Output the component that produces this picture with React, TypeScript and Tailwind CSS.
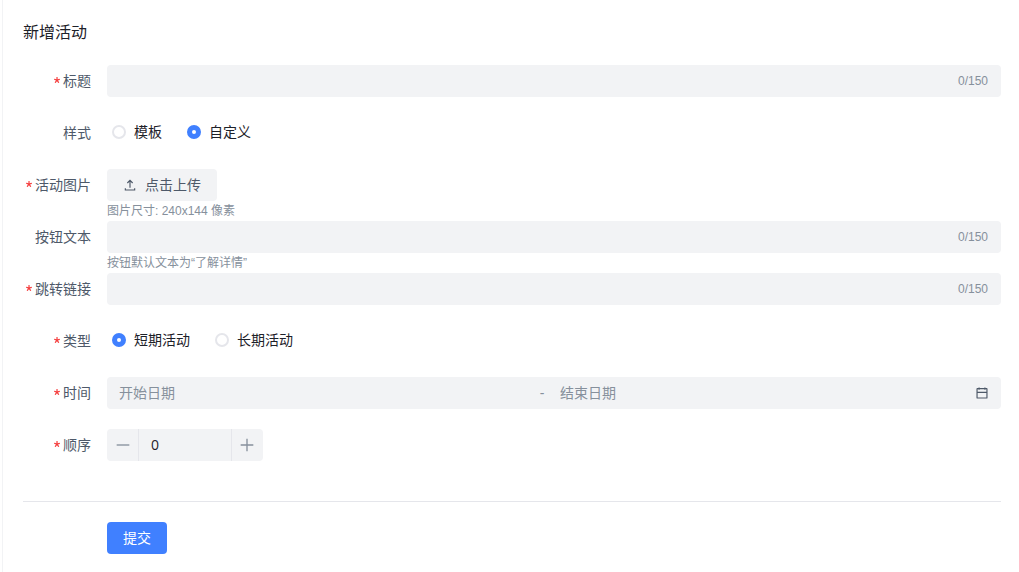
import { useState } from "react"
import type { ReactNode } from "react"

type FormItemProps = {
  label: string
  htmlFor?: string
  required?: boolean
  hint?: string
  children: ReactNode
}

function FormItem({ label, htmlFor, required, hint, children }: FormItemProps) {
  const Label = htmlFor ? "label" : "span"
  return (
    <div className="flex">
      <Label
        htmlFor={htmlFor}
        className="flex h-8 w-[84px] shrink-0 items-center justify-end pr-4 text-[#4e5969]"
      >
        {required && (
          <svg viewBox="0 0 1024 1024" className="mr-[3px] mb-0.5 size-1.5 text-[#f53f3f]" fill="currentColor">
            <path d="M583.338667 17.066667c18.773333 0 34.133333 15.36 34.133333 34.133333v349.013333l313.344-101.888a34.133333 34.133333 0 0 1 43.008 22.016l42.154667 129.706667a34.133333 34.133333 0 0 1-21.845334 43.178667l-315.733333 102.4 208.896 287.744a34.133333 34.133333 0 0 1-7.509333 47.786666l-110.421334 80.213334a34.133333 34.133333 0 0 1-47.786666-7.509334L505.685333 706.218667 288.426667 1005.226667a34.133333 34.133333 0 0 1-47.786667 7.509333l-110.421333-80.213333a34.133333 34.133333 0 0 1-7.509334-47.786667l214.186667-295.253333L29.013333 489.813333a34.133333 34.133333 0 0 1-22.016-43.008l42.154667-129.877333a34.133333 34.133333 0 0 1 43.008-22.016l320.512 104.106667L412.672 51.2c0-18.773333 15.36-34.133333 34.133333-34.133333h136.533334z" />
          </svg>
        )}
        {label}
      </Label>
      <div className="min-w-0 flex-1">
        {children}
        <div className="h-5 text-xs leading-5 text-[#86909c]">{hint}</div>
      </div>
    </div>
  )
}

function CountInput({ id }: { id: string }) {
  const [value, setValue] = useState("")
  return (
    <div className="flex h-8 items-center rounded-sm bg-[#f2f3f5] px-3">
      <input
        id={id}
        type="text"
        maxLength={150}
        value={value}
        onChange={(e) => setValue(e.target.value)}
        className="min-w-0 flex-1 text-[#1d2129] outline-none"
      />
      <span className="pr-px text-xs text-[#86909c]">{value.length}/150</span>
    </div>
  )
}

function RadioGroup({ name, label, options, initial }: { name: string; label: string; options: string[]; initial: string }) {
  const [value, setValue] = useState(initial)
  return (
    <div role="radiogroup" aria-label={label} className="h-8">
      <div className="flex h-[30px] items-center gap-5">
        {options.map((option) => (
          <label key={option} className="flex items-center gap-2 pl-[5px] leading-5 text-[#1d2129]">
            <input
              type="radio"
              name={name}
              checked={value === option}
              onChange={() => setValue(option)}
              className="size-3.5 appearance-none rounded-full border-2 border-[#e5e6eb] bg-white checked:border-5 checked:border-[#4080ff]"
            />
            {option}
          </label>
        ))}
      </div>
    </div>
  )
}

const iconProps = {
  viewBox: "0 0 48 48",
  fill: "none",
  stroke: "currentColor",
  strokeWidth: 4,
}

export default function App() {
  const [order, setOrder] = useState(0)

  return (
    <main className="ml-0.5 min-h-screen border-l border-[#f2f3f5] bg-white pt-5 pr-[18px] pb-[18px] pl-5 font-['Liberation_Sans','Noto_Sans_CJK_SC',sans-serif] text-sm">
      <h1 className="mb-5 text-base leading-[25px] text-[#1d2129]">新增活动</h1>

      <form onSubmit={(e) => e.preventDefault()}>
        <FormItem label="标题" htmlFor="title" required>
          <CountInput id="title" />
        </FormItem>

        <FormItem label="样式">
          <RadioGroup name="style" label="样式" options={["模板", "自定义"]} initial="自定义" />
        </FormItem>

        <FormItem label="活动图片" htmlFor="upload" required hint="图片尺寸: 240x144 像素">
          <button
            id="upload"
            type="button"
            className="flex h-8 items-center gap-2 rounded-sm bg-[#f2f3f5] px-4 text-[#4e5969]"
          >
            <svg {...iconProps} className="size-3.5">
              <path d="M14.93 17.071 24 8l9.071 9.071m-9.07 16.071v-25M40 35v6H8v-6" />
            </svg>
            点击上传
          </button>
        </FormItem>

        <FormItem label="按钮文本" htmlFor="button-text" hint="按钮默认文本为“了解详情”">
          <CountInput id="button-text" />
        </FormItem>

        <FormItem label="跳转链接" htmlFor="link" required>
          <CountInput id="link" />
        </FormItem>

        <FormItem label="类型" required>
          <RadioGroup name="type" label="类型" options={["短期活动", "长期活动"]} initial="短期活动" />
        </FormItem>

        <FormItem label="时间" htmlFor="start-date" required>
          <div className="flex h-8 items-center rounded-sm bg-[#f2f3f5] pr-3 pl-1 text-[#86909c]">
            <input
              id="start-date"
              type="text"
              placeholder="开始日期"
              className="min-w-0 flex-1 px-2 outline-none placeholder:text-[#86909c]"
            />
            <span className="w-5 text-center">-</span>
            <input
              type="text"
              aria-label="结束日期"
              placeholder="结束日期"
              className="min-w-0 flex-1 px-2 outline-none placeholder:text-[#86909c]"
            />
            <svg {...iconProps} className="ml-0.5 size-3.5 text-[#4e5969]">
              <path d="M7 22h34M14 5v8m20-8v8M8 41h32a1 1 0 0 0 1-1V10a1 1 0 0 0-1-1H8a1 1 0 0 0-1 1v30a1 1 0 0 0 1 1Z" />
            </svg>
          </div>
        </FormItem>

        <FormItem label="顺序" htmlFor="order" required>
          <div className="flex h-8 w-[156px] rounded-sm bg-[#f2f3f5] text-[#86909c]">
            <button
              type="button"
              aria-label="减少"
              onClick={() => setOrder(order - 1)}
              className="flex w-8 shrink-0 items-center justify-center border-r border-[#e5e6eb]"
            >
              <svg {...iconProps} className="size-4">
                <path d="M5 24h38" />
              </svg>
            </button>
            <input
              id="order"
              type="text"
              inputMode="numeric"
              value={order}
              onChange={(e) => setOrder(Number(e.target.value) || 0)}
              className="min-w-0 flex-1 px-3 font-['Open_Sans',sans-serif] text-[#1d2129] outline-none"
            />
            <button
              type="button"
              aria-label="增加"
              onClick={() => setOrder(order + 1)}
              className="flex w-8 shrink-0 items-center justify-center border-l border-[#e5e6eb] pr-px"
            >
              <svg {...iconProps} className="size-4">
                <path d="M5 24h38M24 5v38" />
              </svg>
            </button>
          </div>
        </FormItem>

        <div className="mt-5 border-t border-[#e5e6eb] pt-5 pl-[84px]">
          <button type="submit" className="h-8 rounded-sm bg-[#4080ff] px-4 text-white">
            提交
          </button>
        </div>
      </form>
    </main>
  )
}
